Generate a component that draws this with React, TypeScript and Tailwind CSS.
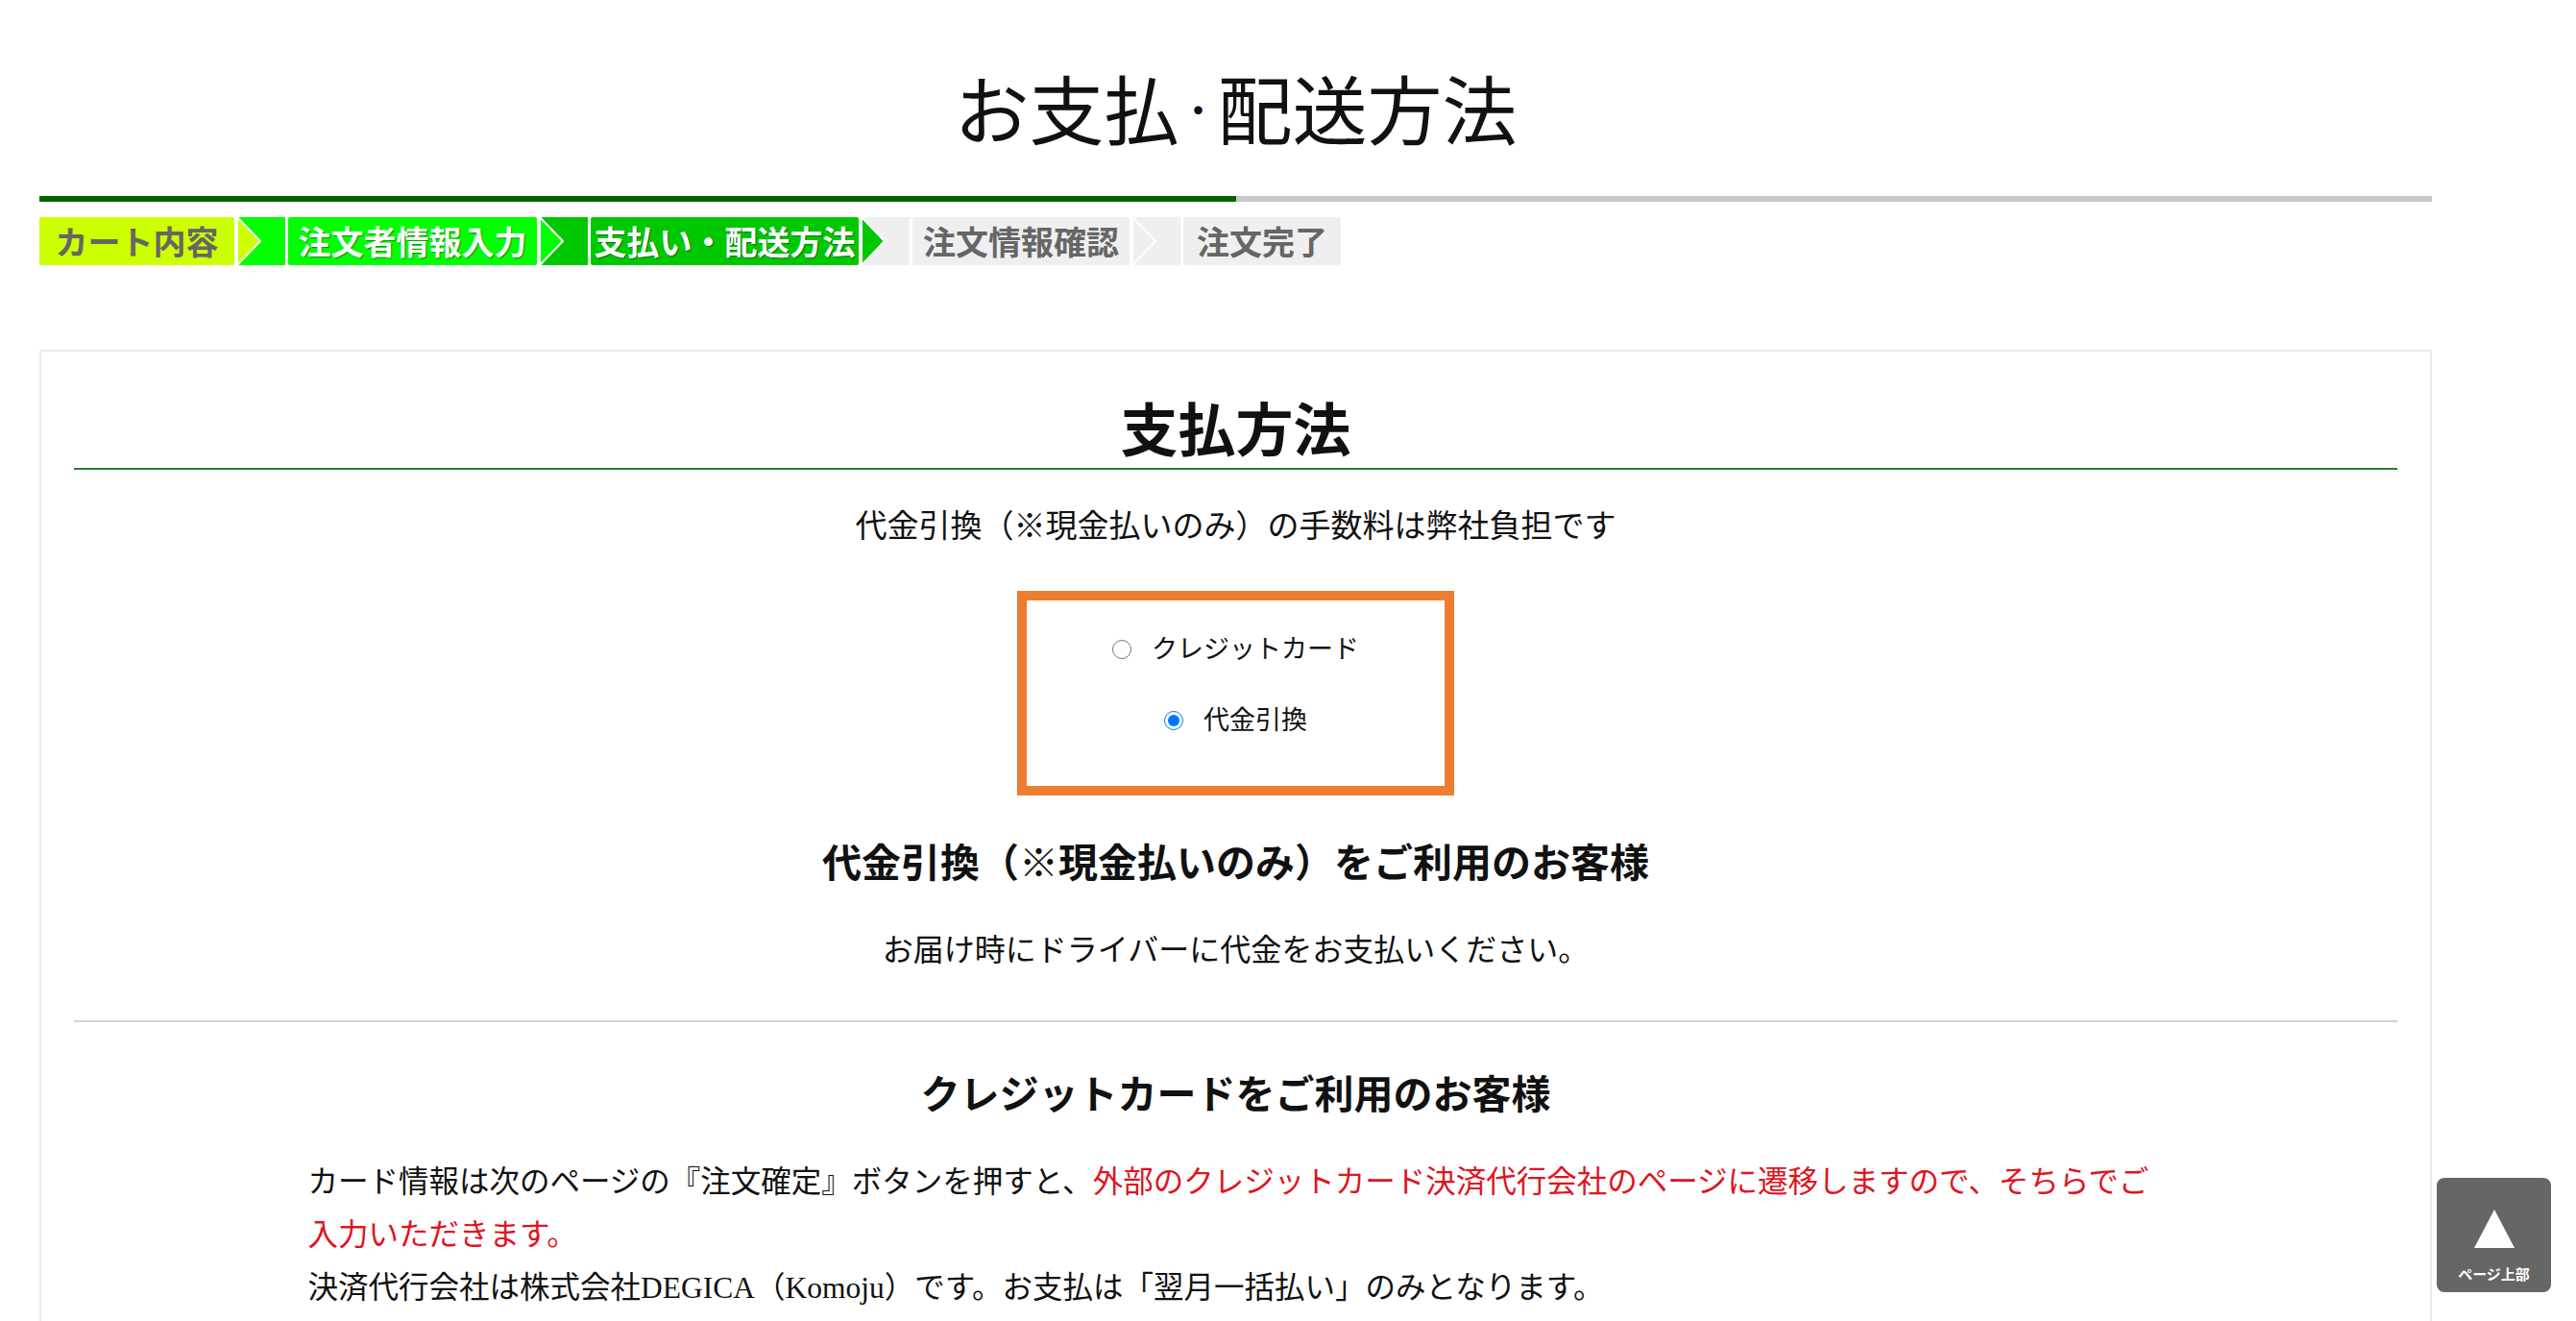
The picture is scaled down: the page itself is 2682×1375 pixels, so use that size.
import React from "react"

// 手順バーの各ステップ
type Step = { label: string; width: string; bg: string; text: string }

const steps: Step[] = [
  { label: "カート内容", width: "w-[203px]", bg: "bg-[#ccff00]", text: "text-[#666666]" },
  { label: "注文者情報入力", width: "w-[259px]", bg: "bg-[#00ff00]", text: "text-white [text-shadow:1px_1px_1px_rgba(0,0,0,0.45)]" },
  { label: "支払い・配送方法", width: "w-[279px]", bg: "bg-[#00c800]", text: "text-white [text-shadow:1px_1px_1px_rgba(0,0,0,0.45)]" },
  { label: "注文情報確認", width: "w-[226px]", bg: "bg-[#efefef]", text: "text-[#666666]" },
  { label: "注文完了", width: "w-[164px]", bg: "bg-[#efefef]", text: "text-[#666666]" },
]

// 矢印: 背景は次のステップの色、三角形は前のステップの色
const arrows = [
  { bg: "bg-[#00ff00]", fill: "#ccff00" },
  { bg: "bg-[#00c800]", fill: "#00ff00" },
  { bg: "bg-[#efefef]", fill: "#00c800" },
  { bg: "bg-[#efefef]", fill: "#efefef" },
]

function Arrow({ bg, fill }: { bg: string; fill: string }) {
  return (
    <div className={`w-[50px] h-[50px] ${bg}`}>
      <svg width="50" height="50" viewBox="0 0 50 50">
        <polygon points="0,0 24,25 0,50" fill={fill} stroke="#ffffff" strokeWidth="2" />
      </svg>
    </div>
  )
}

function StepBar() {
  return (
    <div className="mt-[16px] flex h-[50px] gap-[3px]">
      {steps.map((s, i) => (
        <React.Fragment key={s.label}>
          <div
            className={`${s.width} ${s.bg} ${s.text} flex h-full items-center justify-center rounded-[2px] text-[34px] font-bold leading-none whitespace-nowrap`}
          >
            {s.label}
          </div>
          {i < arrows.length && <Arrow bg={arrows[i].bg} fill={arrows[i].fill} />}
        </React.Fragment>
      ))}
    </div>
  )
}

function PaymentChoice() {
  return (
    <div className="mx-auto mt-[50px] h-[213px] w-[455px] border-[10px] border-[#ed7d31] bg-white">
      <div className="flex flex-col items-center gap-[34px] pt-[31px] font-['Liberation_Serif','Noto_Sans_CJK_JP',serif] text-[27px] text-[#111]">
        <label className="flex h-[40px] items-center gap-[21px]">
          <input type="radio" name="pay" className="m-0 h-[20px] w-[20px]" />
          <span>クレジットカード</span>
        </label>
        <label className="flex h-[40px] items-center gap-[21px]">
          <input type="radio" name="pay" defaultChecked className="m-0 h-[20px] w-[20px]" />
          <span>代金引換</span>
        </label>
      </div>
    </div>
  )
}

export default function App() {
  return (
    <div className="min-h-screen bg-white font-['Noto_Sans_CJK_JP',sans-serif] text-[#111]">
      <div className="ml-[41px] w-[2491px] pb-[300px]">
        <h1 className="pt-[72px] text-center text-[78px] font-normal leading-none text-[#111]">
          お支払<span className="text-[40px] [vertical-align:15px]">・</span>配送方法
        </h1>

        {/* 進捗バー */}
        <div className="mt-[54px] flex h-[6px]">
          <div className="w-1/2 bg-[#006400]" />
          <div className="w-1/2 bg-[#c8c8c8]" />
        </div>

        <StepBar />

        {/* 本体カード */}
        <div className="mt-[88px] border-2 border-[#ebebeb] bg-white px-[34px] pb-[200px]">
          <h2 className="pt-[48px] text-center text-[60px] font-bold leading-none">支払方法</h2>
          <div className="mt-[13px] h-[2px] bg-[#2e7d32]" />

          <p className="mt-[43px] text-center font-['Liberation_Serif','Noto_Sans_CJK_JP',serif] text-[33px] leading-none">
            代金引換（※現金払いのみ）の手数料は弊社負担です
          </p>

          <PaymentChoice />

          <h3 className="mt-[47px] text-center text-[41px] font-bold leading-none">
            代金引換（※現金払いのみ）をご利用のお客様
          </h3>
          <p className="mt-[57px] text-center font-['Liberation_Serif','Noto_Sans_CJK_JP',serif] text-[32px] leading-none">
            お届け時にドライバーに代金をお支払いください。
          </p>

          <div className="mt-[57px] h-[2px] bg-[#d3d3d3]" />

          <h3 className="mt-[52px] text-center text-[41px] font-bold leading-none">
            クレジットカードをご利用のお客様
          </h3>
          <p className="mx-auto mt-[46px] w-[1932px] whitespace-nowrap font-['Liberation_Serif','Noto_Sans_CJK_JP',serif] text-[31.5px] leading-[55px]">
            カード情報は次のページの『注文確定』ボタンを押すと、
            <span className="text-[#e0141e]">外部のクレジットカード決済代行会社のページに遷移しますので、そちらでご</span>
            <br />
            <span className="text-[#e0141e]">入力いただきます。</span>
            <br />
            決済代行会社は株式会社DEGICA（Komoju）です。お支払は「翌月一括払い」のみとなります。
          </p>
        </div>
      </div>

      {/* ページ上部へ */}
      <a
        href="#"
        className="fixed bottom-[30px] right-[26px] flex h-[119px] w-[119px] flex-col items-center rounded-[8px] bg-[#666666] text-white"
      >
        <svg width="42" height="40" viewBox="0 0 42 40" className="mt-[33px]">
          <polygon points="21,0 42,40 0,40" fill="#ffffff" />
        </svg>
        <span className="mt-[19px] text-[15px] font-bold leading-none">ページ上部</span>
      </a>
    </div>
  )
}
